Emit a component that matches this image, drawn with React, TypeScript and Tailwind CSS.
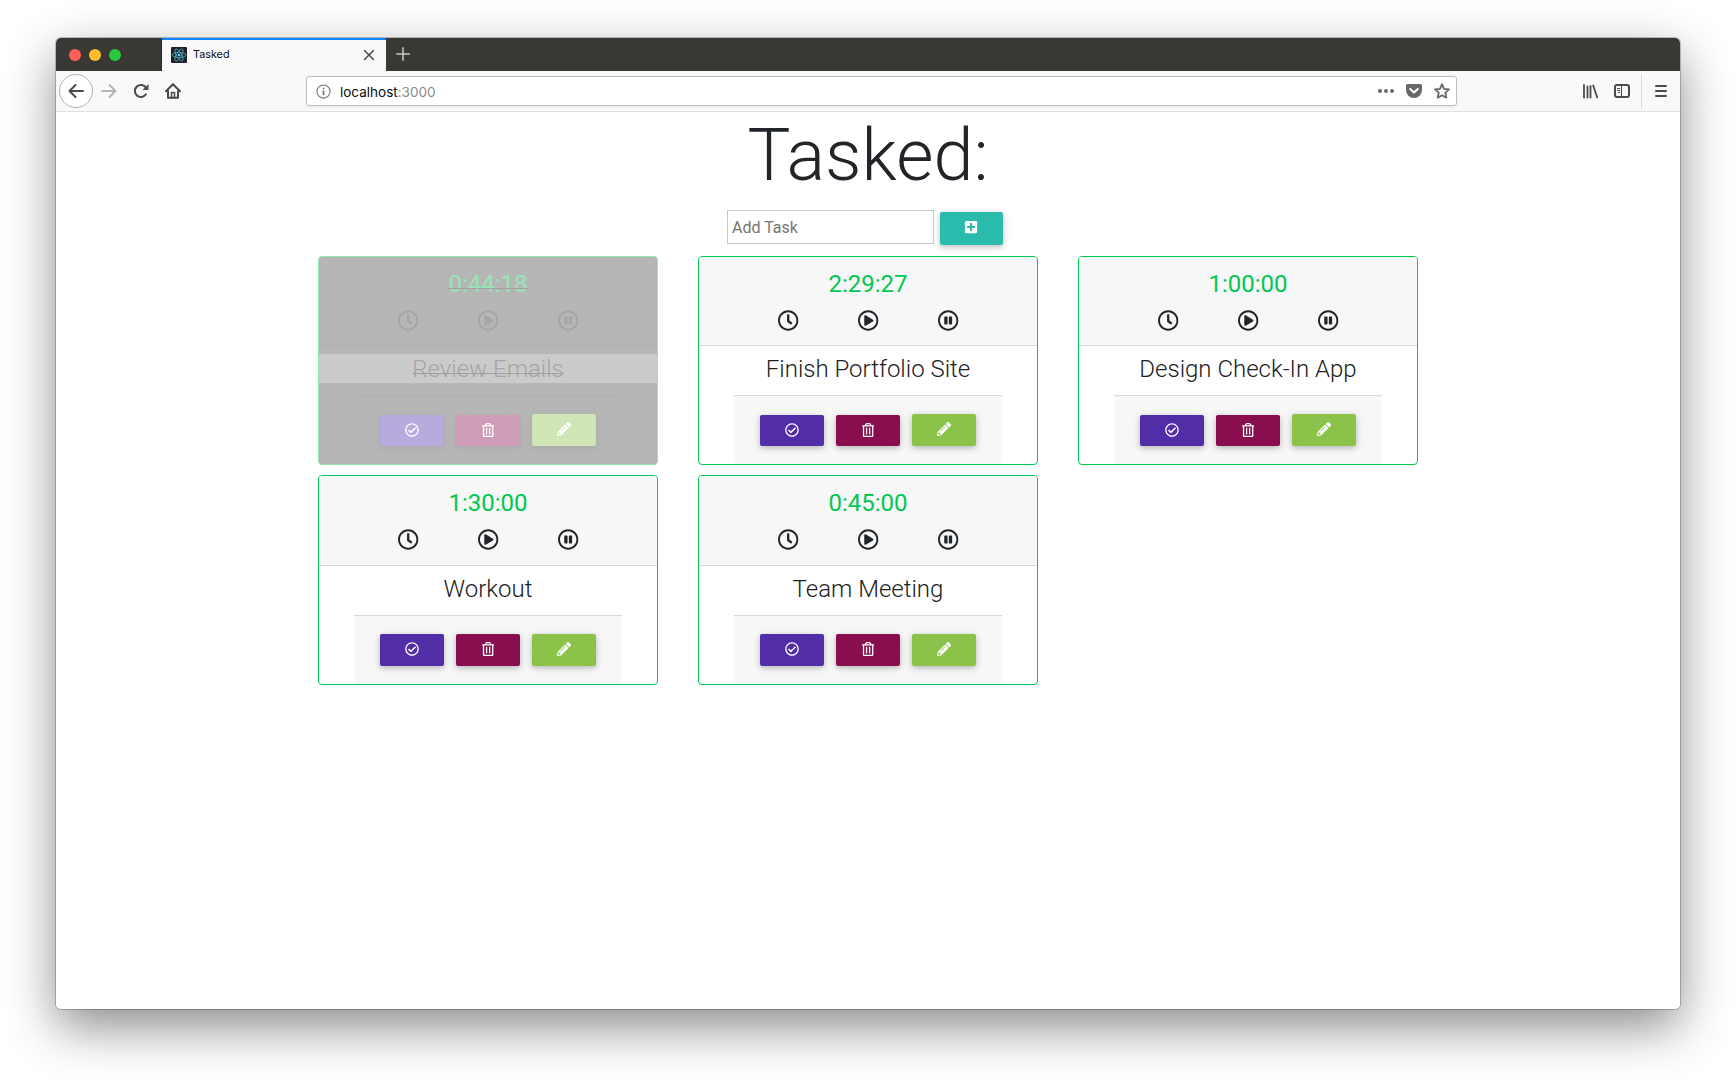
import React from 'react';
import { FaRegClock, FaRegPlayCircle, FaRegPauseCircle, FaRegCheckCircle, FaPencilAlt, FaPlusSquare } from 'react-icons/fa';

type Task = { time: string; name: string; done?: boolean };

const tasks: Task[] = [
  { time: '0:44:18', name: 'Review Emails', done: true },
  { time: '2:29:27', name: 'Finish Portfolio Site' },
  { time: '1:00:00', name: 'Design Check-In App' },
  { time: '1:30:00', name: 'Workout' },
  { time: '0:45:00', name: 'Team Meeting' },
];

function ReactLogo() {
  return (
    <svg viewBox="0 0 16 16" className="h-4 w-4 shrink-0">
      <rect width="16" height="16" rx="1" fill="#20232a" />
      <g fill="none" stroke="#4fb3cc" strokeWidth="0.75">
        <ellipse cx="8" cy="8" rx="6.8" ry="2.6" />
        <ellipse cx="8" cy="8" rx="6.8" ry="2.6" transform="rotate(60 8 8)" />
        <ellipse cx="8" cy="8" rx="6.8" ry="2.6" transform="rotate(120 8 8)" />
      </g>
      <circle cx="8" cy="8" r="1.3" fill="#61dafb" />
    </svg>
  );
}

function TrashIcon() {
  return (
    <svg viewBox="0 0 448 512" fill="currentColor" className="h-[14px]">
      <path d="M192 188v216c0 6.627-5.373 12-12 12h-24c-6.627 0-12-5.373-12-12V188c0-6.627 5.373-12 12-12h24c6.627 0 12 5.373 12 12zm100-12h-24c-6.627 0-12 5.373-12 12v216c0 6.627 5.373 12 12 12h24c6.627 0 12-5.373 12-12V188c0-6.627-5.373-12-12-12zm132-96c13.255 0 24 10.745 24 24v12c0 6.627-5.373 12-12 12h-20v336c0 26.510-21.490 48-48 48H80c-26.510 0-48-21.490-48-48V128H12c-6.627 0-12-5.373-12-12v-12c0-13.255 10.745-24 24-24h74.411l34.018-56.696A48 48 0 0 1 173.589 0h100.823a48 48 0 0 1 41.160 23.304L349.589 80H424zm-269.611 0h139.223L276.160 50.913A6 6 0 0 0 271.015 48h-94.028a6 6 0 0 0-5.145 2.913L154.389 80zM368 128H80v330a6 6 0 0 0 6 6h276a6 6 0 0 0 6-6V128z" />
    </svg>
  );
}

function TabStrip() {
  return (
    <div className="flex h-[33px] shrink-0 bg-[#3a3835]">
      <div className="flex w-[106px] items-center gap-2 border-r border-[#2b2a28] pl-[13px]">
        <span className="h-3 w-3 rounded-full bg-[#ff5f57]" />
        <span className="h-3 w-3 rounded-full bg-[#febc2e]" />
        <span className="h-3 w-3 rounded-full bg-[#28c840]" />
      </div>
      <div className="flex w-[224px] items-center border-t-2 border-[#0a84ff] bg-[#f9f9fa] pr-[11px] pb-px pl-[9px]">
        <ReactLogo />
        <span className="ml-[6px] flex-1 text-[10.8px] leading-4 text-[#0c0c0d]">Tasked</span>
        <svg viewBox="0 0 12 12" className="h-3 w-3" stroke="#4a4a4c" strokeWidth="1.5" strokeLinecap="round">
          <path d="M1.5 1.5l9 9M10.5 1.5l-9 9" />
        </svg>
      </div>
      <svg viewBox="0 0 14 14" className="mt-[9px] ml-[10px] h-[14px] w-[14px]" stroke="#c9c9c8" strokeWidth="1.5" strokeLinecap="round">
        <path d="M7 .75v12.5M.75 7h12.5" />
      </svg>
    </div>
  );
}

function Toolbar() {
  return (
    <div className="flex h-[41px] shrink-0 items-center border-b border-[#e0e0e1] bg-[#f9f9fa] text-[#4a4a4b]">
      <div className="flex w-[250px] items-center pl-[3px]">
        <div className="flex h-[34px] w-[34px] items-center justify-center rounded-full border border-[#b1b1b1] bg-white">
          <svg viewBox="0 0 16 16" className="h-4 w-4" fill="none" stroke="currentColor" strokeWidth="2" strokeLinecap="round" strokeLinejoin="round">
            <path d="M15 8H1.5M7.5 2l-6 6 6 6" />
          </svg>
        </div>
        <svg viewBox="0 0 16 16" className="ml-2 h-4 w-4" fill="none" stroke="#b5b5b6" strokeWidth="2" strokeLinecap="round" strokeLinejoin="round">
          <path d="M1 8h13.5M8.500 2l6 6-6 6" />
        </svg>
        <svg viewBox="0 0 16 16" className="ml-4 h-4 w-4" fill="none" stroke="currentColor" strokeWidth="2">
          <path d="M12.900 11.300A6 6 0 1 1 13 4.800" strokeLinecap="round" />
          <path d="M15.500 1v6H9.500z" fill="currentColor" stroke="none" />
        </svg>
        <svg viewBox="0 0 16 16" className="ml-4 h-4 w-4" fill="none" stroke="currentColor" strokeWidth="2" strokeLinecap="round" strokeLinejoin="round">
          <path d="M1 8.300L8 1.300l7 7M3 8v6.800h10V8" />
          <path d="M6.500 15V9.500h3V15" strokeWidth="1.500" />
        </svg>
      </div>
      <div className="flex h-[30px] w-[1151px] items-center rounded-[3px] border border-[#bebebe] bg-white pr-[6px] pl-[9px] shadow-[0_1px_3px_rgba(0,0,0,0.06)]">
        <svg viewBox="0 0 16 16" className="h-[15px] w-[15px]" fill="none" stroke="#737373">
          <circle cx="8" cy="8" r="7" strokeWidth="1.200" />
          <path d="M8 7v5M8 4v1.700" strokeWidth="1.800" />
        </svg>
        <span className="ml-[9px] flex-1 pt-[2px] text-[13.5px] text-[#0c0c0d]">
          localhost<span className="text-[#8a8a8b]">:3000</span>
        </span>
        <svg viewBox="0 0 16 16" className="h-4 w-4" fill="#68686a">
          <circle cx="2" cy="8" r="2" />
          <circle cx="8" cy="8" r="2" />
          <circle cx="14" cy="8" r="2" />
        </svg>
        <svg viewBox="0 0 16 16" className="ml-3 h-4 w-4">
          <path d="M1.500 1h13A1.500 1.500 0 0 1 16 2.500V7A8 8 0 0 1 0 7V2.500A1.500 1.500 0 0 1 1.500 1z" fill="#68686a" />
          <path d="M4.200 6L8 9.600 11.800 6" fill="none" stroke="#fff" strokeWidth="2" strokeLinecap="round" strokeLinejoin="round" />
        </svg>
        <svg viewBox="0 0 16 16" className="ml-3 h-4 w-4" fill="none" stroke="#68686a" strokeWidth="1.800" strokeLinejoin="round">
          <path d="M8 1.200l2 4.600 5 .5-3.700 3.400 1 5L8 12.200l-4.300 2.500 1-5L1 6.300l5-.5z" />
        </svg>
      </div>
      <svg viewBox="0 0 16 16" className="ml-[126px] h-4 w-4" stroke="currentColor" strokeWidth="1.8" strokeLinecap="round">
        <path d="M1 2v12.500M4.500 3.500v11M7.500 3v11.500M10.200 2.500l4 12" />
      </svg>
      <svg viewBox="0 0 16 16" className="ml-[15px] h-4 w-4" fill="none" stroke="currentColor">
        <rect x="1" y="2" width="14" height="12" rx="2" strokeWidth="2" />
        <path d="M7.500 2v12M3 5.500h3M3 7.500h3M4 9.500h2" strokeWidth="1" />
      </svg>
      <div className="ml-[11px] h-[34px] w-px bg-[#d9d9da]" />
      <svg viewBox="0 0 14 14" className="ml-3 h-[14px] w-[14px]" stroke="currentColor" strokeWidth="2" strokeLinecap="round">
        <path d="M2 2h10M2 7h10M2 12h10" />
      </svg>
    </div>
  );
}

function TaskCard({ task }: { task: Task }) {
  const done = task.done;
  const button = `flex w-16 items-center justify-center rounded-[2px] text-[14px] text-white ${
    done
      ? 'shadow-[0_2px_5px_rgba(0,0,0,0.04),0_2px_10px_rgba(0,0,0,0.04)]'
      : 'shadow-[0_2px_5px_rgba(0,0,0,0.16),0_2px_10px_rgba(0,0,0,0.12)]'
  }`;
  const strike = done
    ? "relative inline-block after:absolute after:inset-x-0 after:top-[18.7px] after:h-px after:bg-[#a0a0a1] after:content-['']"
    : '';
  return (
    <article
      className={`flex h-[209.5px] flex-col overflow-hidden rounded-[4px] border text-center ${
        done ? 'border-[#96e6b4] bg-[#b6b6b6] text-[#a5a5a6]' : 'border-[#00c851] bg-white text-[#212529]'
      }`}
    >
      <header className={`h-[89.5px] shrink-0 border-b pt-[13px] ${done ? 'border-[#b0b0b0]' : 'border-[#d8d8d8] bg-[#f7f7f7]'}`}>
        <div className={`h-[29px] text-2xl leading-[29px] ${done ? 'text-[#96e6b4]' : 'text-[#00c851]'}`}>
          <span className={strike}>{task.time}</span>
        </div>
        <div className="mt-[11.2px] flex -translate-x-[0.3px] justify-center gap-[59px] text-[21px]">
          <FaRegClock />
          <FaRegPlayCircle />
          <FaRegPauseCircle />
        </div>
      </header>
      <h4 className={`mt-2 h-[29px] shrink-0 text-2xl leading-[30px] font-light ${done ? 'bg-[#cbcbcb]' : 'text-[#212121]'}`}>
        <span className={strike}>{task.name}</span>
      </h4>
      <footer
        className={`mx-[35px] mt-3 flex flex-1 items-start justify-center gap-3 rounded-b-[4px] border-t pt-[18px] ${
          done ? 'border-[#b0b0b0]' : 'border-[#d8d8d8] bg-[#f7f7f7]'
        }`}
      >
        <button className={`${button} mt-[0.45px] h-[31.8px] pb-px ${done ? 'bg-[#b7aadc]' : 'bg-[#512da8]'}`}>
          <FaRegCheckCircle />
        </button>
        <button className={`${button} mt-[0.45px] h-[31.8px] pb-px ${done ? 'bg-[#cf9db8]' : 'bg-[#880e4f]'}`}>
          <TrashIcon />
        </button>
        <button className={`${button} h-8 pb-[2px] ${done ? 'bg-[#d0e6b7]' : 'bg-[#8bc34a]'}`}>
          <FaPencilAlt />
        </button>
      </footer>
    </article>
  );
}

export default function App() {
  return (
    <div className="h-[1083px] w-[1736px] overflow-hidden bg-white pt-[38px] pl-14 font-['Inter','Liberation_Sans',sans-serif]">
      <div className="h-[971px] w-[1624px] rounded-[5px] shadow-[0_0_0_1px_rgba(0,0,0,0.22),0_18px_50px_rgba(0,0,0,0.46)]">
        <div className="flex h-full flex-col overflow-hidden rounded-[5px] bg-white">
          <TabStrip />
          <Toolbar />
          <main className="flex flex-1 flex-col items-center font-['Roboto',sans-serif]">
            <h1 className="h-[85px] text-[72px] leading-[88px] font-light text-[#212529]">Tasked:</h1>
            <form className="mt-[13px] mr-[6px] flex h-[36px] w-[282px] items-start">
              <input
                placeholder="Add Task"
                className="ml-[3px] h-[34px] w-[207px] shrink-0 border border-[#c8c8c8] bg-white px-1 text-base placeholder:text-[#757575]"
              />
              <button
                type="button"
                className="mt-[2px] ml-[6px] flex h-[33px] w-[63px] shrink-0 items-center justify-center rounded-[2px] bg-[#2bbbad] pr-px pb-[3px] text-[14px] text-white shadow-[0_2px_5px_rgba(0,0,0,0.16),0_2px_10px_rgba(0,0,0,0.12)]"
              >
                <FaPlusSquare />
              </button>
            </form>
            <section className="mt-[9.6px] grid grid-cols-[repeat(3,340px)] gap-x-10 gap-y-[10px]">
              {tasks.map((task) => (
                <TaskCard key={task.name} task={task} />
              ))}
            </section>
          </main>
        </div>
      </div>
    </div>
  );
}
